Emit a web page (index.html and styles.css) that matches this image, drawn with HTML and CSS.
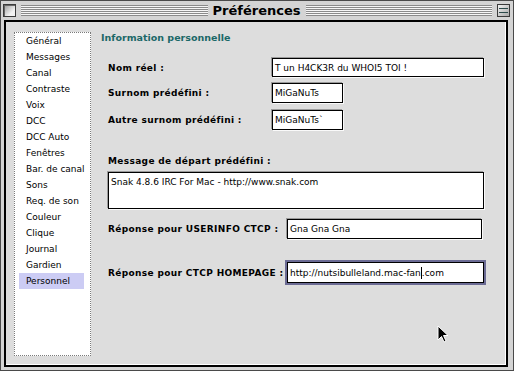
FILE: index.html
```html
<!DOCTYPE html>
<html lang="fr">
<head>
    <meta charset="UTF-8">
    <title>Préférences</title>
    <link rel="stylesheet" href="styles.css">
</head>
<body>
    <div class="window">
        <div class="titlebar">
            <span class="close-box"></span>
            <span class="stripes"></span>
            <span class="title">Préférences</span>
            <span class="stripes"></span>
            <span class="collapse-box"><span></span></span>
        </div>
        <div class="panel">
            <ul class="categories">
                <li>Général</li>
                <li>Messages</li>
                <li>Canal</li>
                <li>Contraste</li>
                <li>Voix</li>
                <li>DCC</li>
                <li>DCC Auto</li>
                <li>Fenêtres</li>
                <li>Bar. de canal</li>
                <li>Sons</li>
                <li>Req. de son</li>
                <li>Couleur</li>
                <li>Clique</li>
                <li>Journal</li>
                <li>Gardien</li>
                <li class="selected">Personnel</li>
            </ul>
            <div class="form">
                <h2>Information personnelle</h2>
                <div class="row row-name">
                    <label>Nom réel :</label>
                    <div class="field field-wide">T un H4CK3R du WHOI5 TOI !</div>
                </div>
                <div class="row row-nick">
                    <label>Surnom prédéfini :</label>
                    <div class="field field-short">MiGaNuTs</div>
                </div>
                <div class="row row-alt">
                    <label>Autre surnom prédéfini :</label>
                    <div class="field field-short">MiGaNuTs`</div>
                </div>
                <label class="block-label">Message de départ prédéfini :</label>
                <div class="field field-area">Snak 4.8.6 IRC For Mac - http://www.snak.com</div>
                <div class="row row-ctcp row-userinfo">
                    <label>Réponse pour USERINFO CTCP :</label>
                    <div class="field field-userinfo">Gna Gna Gna</div>
                </div>
                <div class="row row-ctcp row-homepage">
                    <label>Réponse pour CTCP HOMEPAGE :</label>
                    <div class="field field-homepage focused">http://nutsibulleland.mac-fan<span class="caret"></span>.com</div>
                </div>
            </div>
        </div>
        <svg class="pointer" width="12" height="18" viewBox="0 0 12 18">
            <path d="M1 1 L1 15 L4.5 11.5 L7 17 L9 16 L6.5 10.5 L11 10.5 Z" fill="#000" stroke="#fff" stroke-width="1"/>
        </svg>
    </div>
</body>
</html>
```

FILE: styles.css
```css
body {
    margin: 0;
    background: #dddddd;
    font-family: "DejaVu Sans", sans-serif;
}
.window {
    position: relative;
    width: 514px;
    height: 371px;
    box-sizing: border-box;
    border: 1px solid #4a4a4a;
    background: #d4d4d4;
    display: flex;
    flex-direction: column;
}
.titlebar {
    height: 19px;
    flex: none;
    display: flex;
    align-items: center;
    gap: 5px;
    padding: 0 3px 0 2px;
}
.close-box,
.collapse-box {
    flex: none;
    width: 13px;
    height: 13px;
    box-sizing: border-box;
    border: 1px solid #3a3a3a;
    background: linear-gradient(135deg, #9a9a9a, #f2f2f2 70%);
    box-shadow: inset 1px 1px 0 #666;
}
.collapse-box {
    display: flex;
    align-items: center;
    justify-content: center;
    background: linear-gradient(135deg, #f2f2f2, #a8a8a8);
    box-shadow: none;
}
.collapse-box span {
    width: 9px;
    height: 3px;
    border-top: 1px solid #2b4a4a;
    border-bottom: 1px solid #2b4a4a;
}
.stripes {
    flex: 1;
    height: 11px;
    background: repeating-linear-gradient(to bottom, #8a8a8a 0 1px, #f6f6f6 1px 2px);
}
.title {
    flex: none;
    font-size: 13px;
    font-weight: bold;
    color: #000;
    line-height: 19px;
}
.panel {
    flex: 1;
    margin: 0 5px 3px 3px;
    border: 2px solid #000;
    background: #dddddd;
    box-shadow: inset -1px -1px 0 #ffffff;
    display: flex;
    align-items: flex-start;
}
.categories {
    list-style: none;
    margin: 10px 0 0 8px;
    padding: 0;
    width: 77px;
    height: 324px;
    box-sizing: border-box;
    border: 1px dotted #7a7a7a;
    background: #fff;
    font-size: 9px;
    color: #000;
}
.categories li {
    height: 16px;
    line-height: 16px;
    margin: 0 6px 0 4px;
    padding-left: 7px;
    white-space: nowrap;
}
.categories li.selected {
    background: #ccccf4;
}
.form {
    margin-left: 9px;
    padding-top: 10px;
    flex: 1;
}
.form h2 {
    margin: 0;
    padding-left: 1px;
    font-size: 9.5px;
    line-height: 12px;
    color: #1b6868;
}
.row {
    display: flex;
    align-items: center;
    padding-left: 8px;
}
.row label,
.block-label {
    font-size: 9px;
    font-weight: bold;
    letter-spacing: 0.35px;
    color: #000;
    line-height: 12px;
    white-space: nowrap;
}
.row label {
    width: 164px;
    flex: none;
}
.row-ctcp label {
    width: 179px;
}
.row-name { margin-top: 14px; }
.row-nick { margin-top: 6px; }
.row-alt { margin-top: 7px; }
.block-label {
    display: block;
    margin: 25px 0 0 8px;
}
.field {
    box-sizing: border-box;
    border: 1px solid #000;
    background: #fff;
    font-size: 9px;
    color: #000;
    padding-left: 2px;
    display: flex;
    align-items: center;
    white-space: nowrap;
    box-shadow: -1px -1px 0 #9a9a9a, 1px 1px 0 #fafafa;
}
.field-wide {
    width: 212px;
    height: 19px;
}
.field-short {
    width: 71px;
    height: 20px;
}
.field-area {
    margin: 5px 0 0 8px;
    width: 376px;
    height: 37px;
    align-items: flex-start;
    padding-top: 3px;
    line-height: 12px;
}
.row-userinfo { margin-top: 10px; }
.row-homepage { margin-top: 23px; }
.field-userinfo {
    width: 195px;
    height: 20px;
}
.field-homepage {
    width: 197px;
    height: 21px;
}
.field.focused {
    box-shadow: 0 0 0 2px #6b6b94;
}
.caret {
    display: inline-block;
    width: 1px;
    height: 12px;
    background: #000;
}
.pointer {
    position: absolute;
    left: 436px;
    top: 324px;
}
```
